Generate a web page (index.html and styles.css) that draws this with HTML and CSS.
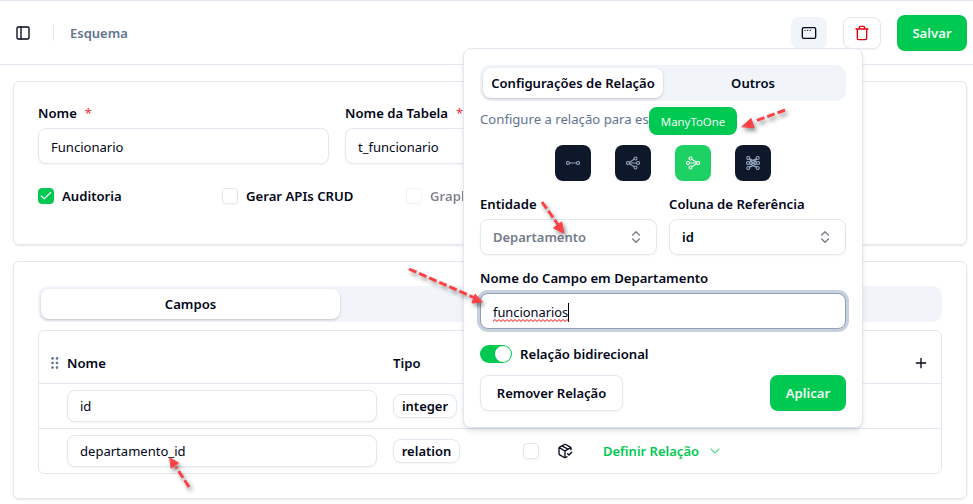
FILE: index.html
```html
<!DOCTYPE html>
<html lang="pt-BR">
<head>
<meta charset="utf-8">
<title>Esquema</title>
<link rel="stylesheet" href="styles.css">
</head>
<body>
<header class="topbar">
  <svg class="icon" viewBox="0 0 24 24"><rect x="3" y="3" width="18" height="18" rx="2"/><path d="M9 3v18"/></svg>
  <span class="divider"></span>
  <span class="crumb">Esquema</span>
  <div class="actions">
    <button class="btn-window"><svg class="icon" viewBox="0 0 24 24"><rect x="2" y="4" width="20" height="16" rx="2"/><path d="M6 8h.01M10 8h.01M14 8h.01"/></svg></button>
    <button class="btn-trash"><svg class="icon" viewBox="0 0 24 24"><path d="M3 6h18M19 6v14a2 2 0 0 1-2 2H7a2 2 0 0 1-2-2V6M8 6V4a2 2 0 0 1 2-2h4a2 2 0 0 1 2 2v2"/></svg></button>
    <button class="btn-primary btn-save">Salvar</button>
  </div>
</header>
<main>
  <section class="card card-form">
    <div class="fields">
      <label class="field"><span class="label">Nome <i>*</i></span><span class="input">Funcionario</span></label>
      <label class="field"><span class="label">Nome da Tabela <i>*</i></span><span class="input">t_funcionario</span></label>
    </div>
    <div class="checks">
      <div class="check"><span class="box on"><svg viewBox="0 0 24 24"><path d="M20 6 9 17l-5-5"/></svg></span><span>Auditoria</span></div>
      <div class="check"><span class="box"></span><span>Gerar APIs CRUD</span></div>
      <div class="check disabled"><span class="box"></span><span>GraphQL</span></div>
    </div>
  </section>
  <section class="card card-table">
    <div class="tabs"><div class="tab active">Campos</div></div>
    <div class="table">
      <div class="row head">
        <svg class="grip" viewBox="0 0 8 12"><circle cx="1.5" cy="1.4" r="1.3"/><circle cx="6" cy="1.4" r="1.3"/><circle cx="1.5" cy="6" r="1.3"/><circle cx="6" cy="6" r="1.3"/><circle cx="1.5" cy="10.6" r="1.3"/><circle cx="6" cy="10.6" r="1.3"/></svg>
        <div class="col-name">Nome</div>
        <div class="col-type">Tipo</div>
        <svg class="icon plus" viewBox="0 0 24 24"><path d="M5 12h14M12 5v14"/></svg>
      </div>
      <div class="row">
        <div class="col-name"><span class="input small">id</span></div>
        <div class="col-type"><span class="badge">integer</span></div>
      </div>
      <div class="row">
        <div class="col-name"><span class="input small">departamento_id</span></div>
        <div class="col-type"><span class="badge badge-rel">relation</span></div>
        <span class="box"></span>
        <svg class="icon pack" viewBox="0 0 24 24"><path d="m16 16 2 2 4-4M21 10V8a2 2 0 0 0-1-1.730l-7-4a2 2 0 0 0-2 0l-7 4A2 2 0 0 0 3 8v8a2 2 0 0 0 1 1.730l7 4a2 2 0 0 0 2 0l2-1.140M7.500 4.270l9 5.150M3.290 7 12 12l8.710-5M12 22V12"/></svg>
        <span class="define">Definir Relação<svg viewBox="0 0 24 24"><path d="m6 9 6 6 6-6"/></svg></span>
      </div>
    </div>
  </section>
</main>

<div class="popover">
  <div class="ptabs"><div class="ptab active">Configurações de Relação</div><div class="ptab">Outros</div></div>
  <p class="hint">Configure a relação para es</p>
  <div class="kinds">
    <button class="kind"><svg viewBox="0 0 14 14"><circle cx="2" cy="7" r="1.500"/><circle cx="12" cy="7" r="1.500"/><path d="M3.500 7h7"/></svg></button>
    <button class="kind"><svg viewBox="0 0 14 14"><circle cx="2" cy="7" r="1.500"/><circle cx="9.500" cy="2.500" r="1.500"/><circle cx="12" cy="7" r="1.500"/><circle cx="9.500" cy="11.500" r="1.500"/><path d="M3.500 7h7M3.300 6.200 8.200 3.300M3.300 7.800l4.900 2.900"/></svg></button>
    <button class="kind selected"><svg viewBox="0 0 14 14"><circle cx="12" cy="7" r="1.500"/><circle cx="4.500" cy="2.500" r="1.500"/><circle cx="2" cy="7" r="1.500"/><circle cx="4.500" cy="11.500" r="1.500"/><path d="M3.500 7h7M10.700 6.200 5.800 3.300M10.700 7.800l-4.900 2.900"/></svg><span class="tip">ManyToOne</span></button>
    <button class="kind"><svg viewBox="0 0 14 14"><circle cx="2.300" cy="2" r="1.500"/><circle cx="11.700" cy="2" r="1.500"/><circle cx="2" cy="7" r="1.500"/><circle cx="12" cy="7" r="1.500"/><circle cx="2.300" cy="12" r="1.500"/><circle cx="11.700" cy="12" r="1.500"/><path d="M3.500 7h7M3.300 3l7.400 8M10.700 3l-7.400 8M3.300 6l7-3.300M10.700 6l-7-3.300M3.300 8l7 3.300M10.700 8l-7 3.300"/></svg></button>
  </div>
  <div class="selects">
    <div class="field"><span class="label">Entidade</span><span class="select muted">Departamento<svg viewBox="0 0 24 24"><path d="m7 15 5 5 5-5M7 9l5-5 5 5"/></svg></span></div>
    <div class="field"><span class="label">Coluna de Referência</span><span class="select">id<svg viewBox="0 0 24 24"><path d="m7 15 5 5 5-5M7 9l5-5 5 5"/></svg></span></div>
  </div>
  <div class="field fieldname"><span class="label">Nome do Campo em Departamento</span><span class="input focus"><span class="typed">funcionarios<svg class="wave" viewBox="0 0 76 3"><path d="M0 2.500 2 .5l2 2 2-2 2 2 2-2 2 2 2-2 2 2 2-2 2 2 2-2 2 2 2-2 2 2 2-2 2 2 2-2 2 2 2-2 2 2 2-2 2 2 2-2 2 2 2-2 2 2 2-2 2 2 2-2 2 2 2-2 2 2 2-2 2 2 2-2 2 2 2-2 2 2"/></svg></span><span class="caret"></span></span></div>
  <div class="toggle"><span class="switch"></span><span>Relação bidirecional</span></div>
  <div class="foot"><button class="btn-outline">Remover Relação</button><button class="btn-primary btn-apply">Aplicar</button></div>
</div>

<svg class="arrows" viewBox="0 0 973 504">
  <g><path d="m785 110-31 11.500"/><polygon points="742,126.500 751,118.500 754,127.500"/></g>
  <g><path d="m542 202 17 24"/><polygon points="563.500,233 553.500,228 561.500,222"/></g>
  <g><path d="m409 269 65 28.500"/><polygon points="482,302 472,303 475,294.500"/></g>
  <g><path d="m189 487-13-20"/><polygon points="170,458 178.500,463 171.500,468"/></g>
</svg>
</body>
</html>
```
FILE: styles.css
```css
*{box-sizing:border-box}
body{margin:0;width:973px;height:504px;overflow:hidden;background:#fff;color:#020618;font:600 13.150px/20px "Noto Sans","Open Sans",sans-serif;position:relative}
button{font:inherit;border:0;padding:0;margin:0;color:inherit;background:none;display:flex;align-items:center;justify-content:center}
span{white-space:nowrap}
svg{fill:none;stroke:currentColor;stroke-width:2;stroke-linecap:round;stroke-linejoin:round;flex:none}
.icon{width:16px;height:16px}
.topbar{height:65px;border-top:1px solid #e2e8f0;border-bottom:1px solid #e2e8f0;display:flex;align-items:center;padding:0 6px 0 15px}
.divider{width:1px;height:16px;background:#e2e8f0;margin:0 16px 0 22px}
.crumb{color:#62748e;font-size:13px}
.actions{display:flex;align-items:center;margin-left:auto}
.btn-window{width:36px;height:32px;border-radius:8px;background:#f1f5f9;margin-right:16px}
.btn-trash{width:38px;height:32px;border:1px solid #e2e8f0;border-radius:8px;color:#e7000b;margin-right:16px;box-shadow:0 1px 2px #0000000d}
.btn-primary{background:#00c951;color:#f0fdf4;border-radius:8px;height:36px}
.btn-save{width:70px}
.card{border:1px solid #e2e8f0;border-radius:6px;box-shadow:0 1px 2px #00000018}
main{padding:16px 6px 0 13px;display:flex;flex-direction:column;gap:16px}
.card-form{height:164px;padding:21px 24px;overflow:hidden}
.fields{display:grid;grid-template-columns:291px 291px 1fr;gap:16px}
.field{display:flex;flex-direction:column}
.label{height:20px;margin-bottom:5px;display:flex}
.label i{color:#fb2c36;font-style:normal;font-weight:400;margin-left:8px}
.input{height:36px;border:1px solid #e2e8f0;border-radius:8px;display:flex;align-items:center;padding:1px 12px 0;font-weight:400;font-size:13.050px;box-shadow:0 1px 2px #0000000d;background:#fff}
.checks{display:flex;margin-top:22px}
.check{display:flex;align-items:center;gap:8px;width:184px}
.box{width:16px;height:16px;border:1px solid #e2e8f0;border-radius:4px;box-shadow:0 1px 2px #0000000d;flex:none}
.box.on{background:#00c951;border-color:#00c951;color:#fff;display:flex;align-items:center;justify-content:center}
.box.on svg{width:14px;height:14px}
.disabled{opacity:.5}
.card-table{height:238px;padding:24px}
.tabs{height:36px;background:#f1f5f9;border-radius:10px;padding:3px}
.tab{width:299px;height:30px;border-radius:8px;display:flex;align-items:center;justify-content:center}
.active{background:#fff;box-shadow:0 1px 3px #0000001a,0 1px 2px #0000001a}
.table{margin-top:8px;border:1px solid #e2e8f0;border-radius:6px}
.row{height:45px;display:flex;align-items:center;padding-left:28px;border-top:1px solid #e2e8f0}
.head{height:52px;border:0;padding:12px 12px 0 12px}
.grip{width:8px;height:12px;fill:#62748e;stroke:none;margin-right:8px}
.col-name{width:326px;flex:none}
.col-name .input{width:310px}
.col-name .small{height:32px;padding-top:0}
.col-type{width:130px;flex:none}
.plus{margin-left:auto;stroke-width:2}
.badge{height:24px;border:1px solid #e2e8f0;border-radius:8px;display:flex;align-items:center;justify-content:center;width:64px;font-size:13px;box-shadow:0 1px 2px #0000000d}
.badge-rel{width:67px}
.pack{margin-left:18px}
.define{color:#00c951;margin-left:30px;display:flex;align-items:center;gap:8px;font-size:13px}
.define svg{width:16px;height:16px;opacity:.6}
.popover{position:absolute;left:463px;top:48px;width:400px;height:380px;border:1px solid #e2e8f0;border-radius:8px;background:#fff;padding:16px;box-shadow:0 4px 6px -1px #0000001a,0 2px 4px -2px #0000001a}
.ptabs{height:36px;background:#f1f5f9;border-radius:10px;padding:3px;display:grid;grid-template-columns:1fr 1fr}
.ptab{border-radius:8px;display:flex;align-items:center;justify-content:center;font-size:13.050px}
.hint{margin:8px 0 16px;font-weight:400;color:#62748e;height:20px}
.kinds{display:flex;justify-content:center;gap:24px}
.kind{width:36px;height:36px;border-radius:8px;background:#0f172b;color:#90a1b9;position:relative}
.kind svg{width:14px;height:14px;stroke-width:1.150}
.selected{background:#1dd164;color:#f0fdf4}
.tip{position:absolute;left:-26px;top:-38px;width:88px;height:28px;border-radius:8px;background:#00c951;color:#f0fdf4;font-size:11.400px;line-height:29px;font-weight:400;text-align:center}
.tip::after{content:"";position:absolute;left:39px;bottom:-4px;width:10px;height:10px;border-radius:2px;background:#00c951;transform:rotate(45deg);z-index:-1}
.selects{display:grid;grid-template-columns:1fr 1fr;gap:12px;margin-top:13px}
.select{height:36px;border:1px solid #e2e8f0;border-radius:8px;display:flex;align-items:center;justify-content:space-between;padding:0 12px;font-size:13px;box-shadow:0 1px 2px #0000000d}
.select svg{width:16px;height:16px;color:#777c88}
.muted{color:#737b8b}
.fieldname{margin-top:13px}
.focus{border-color:#90a1b9;box-shadow:0 0 0 3px #c8d0dc;padding-top:2px;font-size:12.850px}
.typed{position:relative}
.wave{position:absolute;left:0;bottom:0;width:76px;height:3px;stroke:#f00;stroke-width:1}
.caret{width:1px;height:19px;background:#000}
.toggle{display:flex;align-items:center;gap:8px;margin-top:15px;height:20px}
.switch{width:32px;height:18px;border-radius:9px;background:#00c951;padding:1px;display:flex;justify-content:flex-end}
.switch::after{content:"";width:16px;height:16px;border-radius:50%;background:#fff}
.foot{display:flex;justify-content:space-between;margin-top:11px}
.btn-outline{width:143px;height:36px;border:1px solid #e2e8f0;border-radius:8px;font-size:13px;box-shadow:0 1px 2px #0000000d}
.btn-apply{width:76px}
.arrows{position:absolute;left:0;top:0;width:973px;height:504px;pointer-events:none;filter:drop-shadow(2px 3px 2px #00000070)}
.arrows path{stroke:#fb4143;stroke-width:3;stroke-dasharray:8 3;stroke-linecap:butt}
.arrows polygon{fill:#fb4143;stroke:#fb4143;stroke-width:1}
```
